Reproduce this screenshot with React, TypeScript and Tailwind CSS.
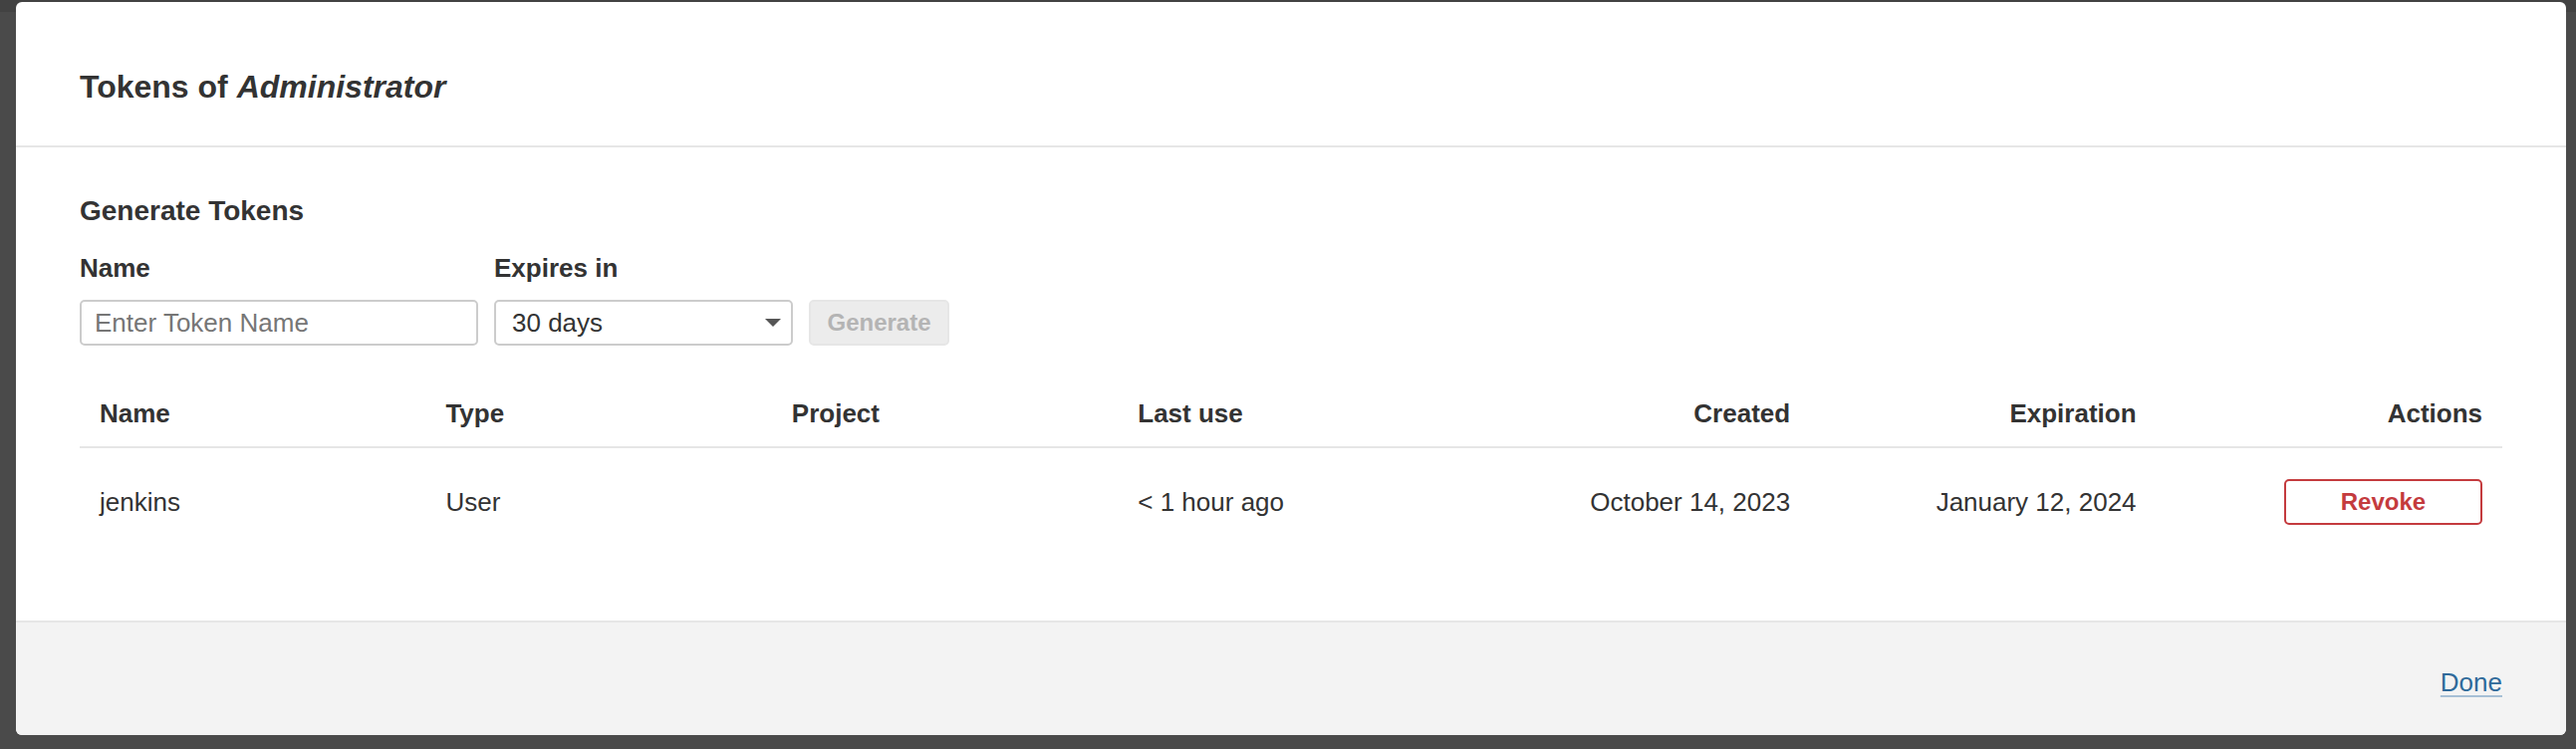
import React from "react";

interface TokenRow {
  name: string;
  type: string;
  project: string;
  lastUse: string;
  created: string;
  expiration: string;
}

const tokens: TokenRow[] = [
  {
    name: "jenkins",
    type: "User",
    project: "",
    lastUse: "< 1 hour ago",
    created: "October 14, 2023",
    expiration: "January 12, 2024",
  },
];

// Small caret used by the "Expires in" select
function Caret() {
  return (
    <svg width="16" height="8" viewBox="0 0 16 8" className="shrink-0">
      <path d="M0 0 L16 0 L8 8 Z" fill="#555555" />
    </svg>
  );
}

/**
 * Form to generate a new token: name input, expiration select and button.
 */
function GenerateForm() {
  return (
    <div className="flex flex-col">
      <h3 className="text-[28px] leading-[36px] font-bold text-[#333333]">
        Generate Tokens
      </h3>
      <div className="flex items-end gap-[16px] mt-[23px]">
        <div className="flex flex-col w-[400px]">
          <label className="text-[26px] leading-[32px] font-bold text-[#333333] mb-[16px]">
            Name
          </label>
          <input
            className="h-[46px] w-full border-2 border-[#cccccc] rounded-[5px] px-[13px] text-[26px] text-[#333333] placeholder:text-[#767676] outline-none bg-white"
            placeholder="Enter Token Name"
          />
        </div>
        <div className="flex flex-col w-[300px]">
          <label className="text-[26px] leading-[32px] font-bold text-[#333333] mb-[16px]">
            Expires in
          </label>
          <div className="h-[46px] w-full border-2 border-[#cccccc] rounded-[5px] pl-[16px] pr-[10px] flex items-center justify-between bg-white">
            <span className="text-[26px] text-[#333333]">30 days</span>
            <Caret />
          </div>
        </div>
        <button className="h-[46px] w-[141px] border-2 border-[#e6e6e6] bg-[#ececec] rounded-[5px] text-[24px] font-bold text-[#b4b4b4]">
          Generate
        </button>
      </div>
    </div>
  );
}

/**
 * Token table, seven equal columns.
 */
function TokenTable() {
  return (
    <div className="mt-[35px] flex flex-col text-[26px] leading-[32px] text-[#333333]">
      {/* Header row */}
      <div className="grid grid-cols-7 border-b-2 border-[#e6e6e6] font-bold">
        <div className="px-[20px] py-[17px]">Name</div>
        <div className="px-[20px] py-[17px]">Type</div>
        <div className="px-[20px] py-[17px]">Project</div>
        <div className="px-[20px] py-[17px]">Last use</div>
        <div className="px-[20px] py-[17px] text-right">Created</div>
        <div className="px-[20px] py-[17px] text-right">Expiration</div>
        <div className="px-[20px] py-[17px] text-right">Actions</div>
      </div>
      {/* Data rows */}
      {tokens.map((t) => (
        <div key={t.name} className="grid grid-cols-7 items-center py-[31px]">
          <div className="px-[20px]">{t.name}</div>
          <div className="px-[20px]">{t.type}</div>
          <div className="px-[20px]">{t.project}</div>
          <div className="px-[20px]">{t.lastUse}</div>
          <div className="px-[20px] text-right">{t.created}</div>
          <div className="px-[20px] text-right">{t.expiration}</div>
          <div className="px-[20px] flex justify-end">
            <button className="h-[46px] w-[199px] border-2 border-[#c43b3e] rounded-[5px] bg-white text-[24px] font-bold text-[#c43b3e]">
              Revoke
            </button>
          </div>
        </div>
      ))}
    </div>
  );
}

export default function App() {
  return (
    <div className="h-[752px] w-full bg-[linear-gradient(to_bottom,#424242_12px,#4a4a4a_12px)] pt-[2px] pl-[16px] font-['Liberation_Sans',Arial,sans-serif]">
      <div className="w-[2560px] h-[736px] bg-white rounded-[6px] overflow-hidden flex flex-col">
        {/* Header */}
        <div className="h-[146px] shrink-0 border-b-2 border-[#e6e6e6] px-[64px] pt-[65px]">
          <h2 className="text-[32px] leading-[40px] font-bold text-[#333333]">
            Tokens of <em className="italic">Administrator</em>
          </h2>
        </div>

        {/* Body */}
        <div className="flex-1 px-[64px] pt-[46px]">
          <GenerateForm />
          <TokenTable />
        </div>

        {/* Footer */}
        <div className="h-[115px] shrink-0 border-t-2 border-[#e6e6e6] bg-[#f3f3f3] px-[64px] pt-[44px] flex justify-end items-start">
          <a
            href="#"
            className="text-[26px] leading-[32px] text-[#2f6a9a] underline decoration-[#a6bfd5] decoration-2 underline-offset-[4px]"
          >
            Done
          </a>
        </div>
      </div>
    </div>
  );
}
